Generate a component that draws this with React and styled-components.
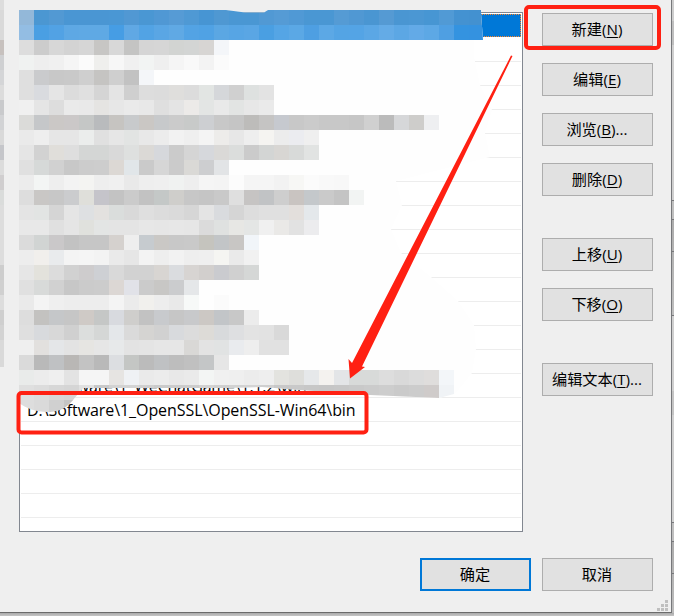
import React from "react";
import styled, { createGlobalStyle } from "styled-components";

const Global = createGlobalStyle`
  * { box-sizing: border-box; }
  body { margin: 0; overflow: hidden; background: #c0c0c0; }
`;

const Desktop = styled.div`
  position: relative;
  width: 674px;
  height: 616px;
  overflow: hidden;
  background:
    linear-gradient(#aaa, #c6c6c6) 0 613px / 100% 3px no-repeat,
    linear-gradient(
      #cdcdcd 21px, #bfbfbf 21px 45px, #cfcfcf 45px 200px, #bfbfbf 200px 219px,
      #acacac 219px, #bebebe 315px, #cfcfcf 315px 391px, #c4c4c4 391px 415px,
      #cfcfcf 415px 522px, #bfbfbf 522px 541px, #acacac 541px, #bcbcbc 613px
    );
  font-family: "Open Sans", "Noto Sans CJK SC", sans-serif;
`;

const Dialog = styled.main`
  width: 672px;
  height: 613px;
  background: #efefef;
  border-right: 1px solid #77787b;
  border-bottom: 1px solid #6b6b6b;
  padding: 12px 18px 0 19px;
  display: flex;
  flex-direction: column;
`;

const Content = styled.div`
  display: flex;
  justify-content: space-between;
  height: 520px;
`;

const PathList = styled.ul`
  list-style: none;
  margin: 0;
  padding: 1px;
  width: 504px;
  height: 520px;
  background: #fff;
  border: 1px solid #828790;
  overflow: hidden;
`;

const PathItem = styled.li`
  height: ${(p) => (p.$selected ? 23 : 24)}px;
  margin-bottom: ${(p) => (p.$selected ? 1 : 0)}px;
  padding-left: 6px;
  border-bottom: ${(p) => (p.$selected ? "none" : "1px solid #ededed")};
  background: ${(p) => (p.$selected ? "#0078d7" : "#fff")};
  outline: ${(p) => (p.$selected ? "1px dotted #ff8728" : "none")};
  outline-offset: -1px;
  font-size: 16px;
  line-height: 24px;
  letter-spacing: ${(p) => p.$spacing || "0"};
  white-space: pre;
  color: #000;
`;

const Actions = styled.div`
  display: flex;
  flex-direction: column;
  width: 111px;
  padding-top: 1px;
`;

const Button = styled.button`
  width: 111px;
  height: 33px;
  flex: none;
  margin: 0 0 ${(p) => p.$gap || 0}px;
  padding: 0 1px 1px 0;
  border: ${(p) => (p.$primary ? "2px solid #0078d7" : "1px solid #adadad")};
  background: #e1e1e1;
  color: #000;
  font-family: inherit;
  font-size: 15.2px;
  line-height: 20px;
  white-space: nowrap;
`;

const Key = styled.span`
  text-decoration: underline;
  text-decoration-thickness: 1px;
  text-underline-offset: 2px;
`;

const Footer = styled.footer`
  display: flex;
  justify-content: flex-end;
  gap: 11px;
  padding-top: 26px;
`;

const Overlay = styled.svg`
  position: absolute;
  inset: 0;
  pointer-events: none;
`;

const MOSAIC = [
  "93b8d9 4b97d2 5299d3 4a96d3 4a96d3 4a96d3 4a97d4 5198d3 4a97d3 5098d4 569bd5 4f99d4 4795d3 4f98d2 4a97d3 4a97d3 5199d4 559bd5 5099d5 4a97d3 4a97d3 559bd4 5098d3 4a96d2 559ad3 4a96d2 4b97d3 4796d3 519ad5 4492d1 4391d0",
  "93bde3 4a9fe3 52a2e4 5ea8e4 5fa9e4 5fa9e4 469de4 60a8e4 52a3e4 5aa6e4 60a9e4 53a3e4 50a2e4 5ba7e3 57a5e4 5aa6e4 4a9fe2 55a5e5 5ba8e5 4e9fe2 5ca8e5 54a4e4 54a4e5 5ba7e5 64abe6 5ca7e4 63aae7 5da8e5 4f9fe2 3493e0 3492e0",
  "dd cc d7 d3 d6 c7c6c4 d8 c4c4c3 d5 d6 d2d4d2 d3d5d4 d7d5d3 f4f6f9",
  "f0f2f1 ee f0 f5 fb efefed f7 f0 f2f4f3 ef f5 f9 f3 fb",
  "df cacbcd c8 c9 cf c5c4c2 cf c2 f4f6f9",
  "df d9dbdf e5 dc e0 d5 e4 cf dd dc dfdedc dc e2e5e3 d5d7da d0 dee1e0 e3",
  "f0 e5 dd ea e9 e5e4e2 e7 ea e8 df e4 eceae8 e3e5e4 e9 e2e4e3 e7 ea",
  "dbdbd9 c5c7c9 cbc8c6 cbc8c8 c5c7c6 b9bbbd c6c4c1 c8cacc cac7c4 c7c9cb cb c8cac9 cdcfd2 c8 c5 bdbcba c5c4c3 c6c9cf c8 cb c8 c8 c6 d0 bb d6d7d9 cecdcb eeeff1",
  "ea ee e6 e6 ebedec e0 e6 e2e4e3 e8 ec f2 ef f4 edecea e7 ee f5f4f1 ec ebecf0 ef",
  "e5 d2 e0deda de d4d6d5 d4d6d5 d9 dee0df dbd9d6 d6d8dc cb d5 d6d8dc dad9d7 dbdddc cb d3d5d4 d8d6d3 d8dad9 e1e3e2",
  "e0 d6d9d8 d1 c8 cc cd dcd8d4 e1e6e9 ca d6 cb dad9d6 cdced0 e2e4e6",
  "ec f3f5f4 ee f3 f4f4f2 ee f0 e9 ee ef f0f2f1 ee f5 f4 fc f5 f5 f2 f7f7f5 fb f9 f8",
  "dd c9c7c5 c7 cbccce dfdfda c5c4ca c3 cb c2 c4c8c7 cfcecb c7 c5 c9 df c6c4c3 c1c3c5 ce c9c4c1 c4c8cb ca c4 f2f4f3",
  "e4 e2e4e3 d5 e5 dee0e2 e3e1df dadddc d9 df dc da d6 e4 d9dbde d5 dd e0 e0 e3dfdc e4e8eb",
  "e8 e8 e0 e5 e0e1dd e3e5e4 e4 e4 e7 e6 e7 e6 db dfe1e0 e7e7e4 e4e6e5 f0 eae9e7 e2 ececee",
  "db d1d4d3 cac8c9 c2 c6 c6 d5d1ce ee c6cbcf cac8c5 c8 c9 c5c4be c2c5c7 c8c6c4 f1f5f9",
  "ed f1efec e9ebed f4 f5 f3 ea e6 f3 ee f2 ee ef f5f5f2 ea f1",
  "e6 e3e2dc dc d1 cecccd ced0d4 d9 d2 d2 d8d5d2 dadcdf d7d4d2 d2cfcd cacbcf d0 d5d7d6",
  "e0 d8dad9 d1 c7 cb cc dcd7d4 e1e2e8 cb c8c7c5 cbccce e5e7e9",
  "ea f4 ef ed ed ed f4 eb f1f0ed ed e9 f7f9f8 fe fb",
  "dd c3c2c0 c5c7c9 c6 cfcac6 c5c7c6 d8dadf cfcecc c2 c8cacd c6 c8c9cb ccc8c4 c2c5c8 c8 ec",
  "df d8dadd d8 d0 dcdedd d5d7d6 e4e7ea da d5d4d2 d1 d8dadd dc dddbd7 d8dadc dedfe1 e3 e2 d9",
  "ef e2e0de e4e6e8 e3 e6e5e2 e6 e7e9ea e3 e4 e6 e6 d9d8d6 e3 e1e3e3 e9ebee ee e1 e1",
  "da b9 bfc1c3 b9b7b5 c3 b9 dcdee1 c4c6c4 bb bfc1c3 bd c0 c4c6c7 e6",
  "e9ebea ec ef e3 f5 f5 e6e4e2 eff1f4 ea ec e8 ea f3f5f4 f0 ef ec ee e3e3df dededb e6e8ea f4f2ef e3e5e7 d8dad9 d8dad9 dd d9 dc dfdddc f3f6f9",
  "df dc d7 d5 e0 c9 d2 d3 cf ca cb cc d2 cf d2 d4 cf c8 c9 c7 c6 c7 c9 cb cd ca cc cfcbca f0f3f6",
  "dd da d0 c4 c8",
];

const shade = (s) => "#" + (s.length === 2 ? s + s + s : s);

function Mosaic() {
  return (
    <g shapeRendering="crispEdges">
      <clipPath id="smear">
        <path d="M19 10H226L245 12.5H264L268 10H481V12L483 40H474V57L480 85L492 110L485 133L490 157L396 181L402 205L391 229L401 253L431 277L458 301L474 325L476 349L472 373L460 388L454 394L439 398L370 395L300 390L262 387L224 388H83C75 397 70 406 60 410C45 415 28 410 19 403Z" />
      </clipPath>
      <g clipPath="url(#smear)">
        <rect x="19" y="10" width="480" height="390" fill="#fefefe" />
        {MOSAIC.map((row, y) =>
          row.split(" ").map((c, x) => (
            <rect key={`${x}-${y}`} x={19 + x * 15} y={10 + y * 15} width="15" height="15" fill={shade(c)} />
          ))
        )}
      </g>
    </g>
  );
}

const LEFT_STRIP = ["d9", "d9", "c7c1be", "cfd0d2", "d4d5d7", "dc", "c9cacc", "d2d3d5", "d9", "c5c6ca", "dc", "d0cecf", "dadcdb", "dd", "dd", "dd", "dd", "cd", "d0", "dd", "cf", "d3", "d9"];

const GRIP = [[665, 600], [661, 604], [665, 604], [657, 608], [661, 608], [665, 608]];

function Annotations() {
  return (
    <Overlay width="674" height="616" viewBox="0 0 674 616">
      {LEFT_STRIP.map((c, i) => (
        <rect key={i} x="0" y={10 + i * 15} width="4" height={i === 22 ? 27 : 15} fill={shade(c)} />
      ))}
      <rect x="0" y="0" width="4" height="10" fill="#ddd" />
      <Mosaic />
      {GRIP.map(([x, y]) => (
        <rect key={`${x}-${y}`} x={x} y={y} width="3" height="3" fill="#bfbfbf" />
      ))}
      <path d="M672 200.5h2M672 219.5h2M672 251.5h2M672 315.5h2M672 522.5h2M672 541.5h2M672 573.5h2" stroke="#77787b" />
      <g fill="none" stroke="#ff2012" strokeWidth="4">
        <rect x="526" y="7" width="133" height="41" rx="3" />
        <rect x="18.5" y="393" width="348" height="39.5" rx="3" />
      </g>
      <path fill="#ff2012" d="M511 55.500L512.500 56L362 366.500L365 367L350 378.500L348.500 359L352 363Z" />
    </Overlay>
  );
}

const ITEMS = Array.from({ length: 22 }, (_, i) => {
  if (i === 15) return { text: "D:\\Software\\1_WeChatGame\\1.1.2\\win", spacing: "-0.2px" };
  if (i === 16) return { text: "D:\\Software\\1_OpenSSL\\OpenSSL-Win64\\bin", spacing: "-0.07px" };
  return { text: "" };
});

const ACTIONS = [
  { label: "新建", accel: "N", gap: 17 },
  { label: "编辑", accel: "E", gap: 17 },
  { label: "浏览", accel: "B", tail: "...", gap: 17 },
  { label: "删除", accel: "D", gap: 42 },
  { label: "上移", accel: "U", gap: 17 },
  { label: "下移", accel: "O", gap: 42 },
  { label: "编辑文本", accel: "T", tail: "..." },
];

export default function App() {
  return (
    <>
      <Global />
      <Desktop>
        <Dialog>
          <Content>
            <PathList>
              {ITEMS.map((item, i) => (
                <PathItem key={i} $selected={i === 0} $spacing={item.spacing}>{item.text}</PathItem>
              ))}
            </PathList>
            <Actions>
              {ACTIONS.map((a) => (
                <Button key={a.accel} $gap={a.gap}>
                  {a.label}(<Key>{a.accel}</Key>){a.tail}
                </Button>
              ))}
            </Actions>
          </Content>
          <Footer>
            <Button $primary>确定</Button>
            <Button>取消</Button>
          </Footer>
        </Dialog>
        <Annotations />
      </Desktop>
    </>
  );
}
